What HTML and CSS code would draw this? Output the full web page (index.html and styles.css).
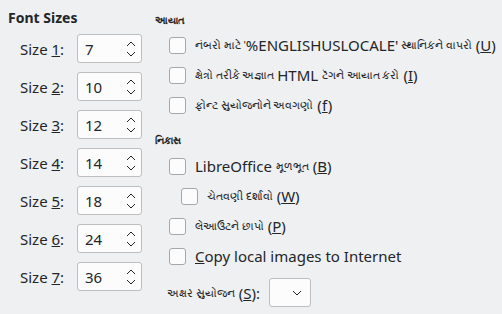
FILE: index.html
```html
<!DOCTYPE html>
<html lang="gu">
<head>
    <meta charset="UTF-8">
    <title>HTML compatibility</title>
    <link rel="stylesheet" href="styles.css">
</head>
<body>
    <div class="page">
        <div class="sizes">
            <h1>Font Sizes</h1>
            <div class="size-list">
                <div class="size-row"><label>Size <u>1</u>:</label><div class="spin"><span>7</span><svg width="12" height="20" viewBox="0 0 12 20"><path d="M2 7 L6 3 L10 7 M2 13 L6 17 L10 13" fill="none" stroke="#232629" stroke-width="1"/></svg></div></div>
                <div class="size-row"><label>Size <u>2</u>:</label><div class="spin"><span>10</span><svg width="12" height="20" viewBox="0 0 12 20"><path d="M2 7 L6 3 L10 7 M2 13 L6 17 L10 13" fill="none" stroke="#232629" stroke-width="1"/></svg></div></div>
                <div class="size-row"><label>Size <u>3</u>:</label><div class="spin"><span>12</span><svg width="12" height="20" viewBox="0 0 12 20"><path d="M2 7 L6 3 L10 7 M2 13 L6 17 L10 13" fill="none" stroke="#232629" stroke-width="1"/></svg></div></div>
                <div class="size-row"><label>Size <u>4</u>:</label><div class="spin"><span>14</span><svg width="12" height="20" viewBox="0 0 12 20"><path d="M2 7 L6 3 L10 7 M2 13 L6 17 L10 13" fill="none" stroke="#232629" stroke-width="1"/></svg></div></div>
                <div class="size-row"><label>Size <u>5</u>:</label><div class="spin"><span>18</span><svg width="12" height="20" viewBox="0 0 12 20"><path d="M2 7 L6 3 L10 7 M2 13 L6 17 L10 13" fill="none" stroke="#232629" stroke-width="1"/></svg></div></div>
                <div class="size-row"><label>Size <u>6</u>:</label><div class="spin"><span>24</span><svg width="12" height="20" viewBox="0 0 12 20"><path d="M2 7 L6 3 L10 7 M2 13 L6 17 L10 13" fill="none" stroke="#232629" stroke-width="1"/></svg></div></div>
                <div class="size-row"><label>Size <u>7</u>:</label><div class="spin"><span>36</span><svg width="12" height="20" viewBox="0 0 12 20"><path d="M2 7 L6 3 L10 7 M2 13 L6 17 L10 13" fill="none" stroke="#232629" stroke-width="1"/></svg></div></div>
            </div>
        </div>

        <div class="options">
            <h2>આયાત</h2>
            <div class="check"><span class="box"></span><span class="gu">નંબરો માટે '</span><span class="en">%ENGLISHUSLOCALE'</span><span class="gu">&nbsp;સ્થાનિકને વાપરો</span><span class="en">&nbsp;(<u>U</u>)</span></div>
            <div class="check"><span class="box"></span><span class="gu">ક્ષેત્રો તરીકે અજ્ઞાત&nbsp;</span><span class="en">HTML&nbsp;</span><span class="gu">ટૅગને આયાત કરો</span><span class="en">&nbsp;(<u>I</u>)</span></div>
            <div class="check"><span class="box"></span><span class="gu">ફોન્ટ સુયોજનોને અવગણો</span><span class="en">&nbsp;(<u>f</u>)</span></div>

            <h2 class="export">નિકાસ</h2>
            <div class="check"><span class="box"></span><span class="en">LibreOffice&nbsp;</span><span class="gu">મૂળભૂત</span><span class="en">&nbsp;(<u>B</u>)</span></div>
            <div class="check nested"><span class="box"></span><span class="gu">ચેતવણી દર્શાવો</span><span class="en">&nbsp;(<u>W</u>)</span></div>
            <div class="check"><span class="box"></span><span class="gu">લેઆઉટને છાપો</span><span class="en">&nbsp;(<u>P</u>)</span></div>
            <div class="check"><span class="box"></span><span class="en"><u>C</u>opy local images to Internet</span></div>

            <div class="charset">
                <span class="gu">અક્ષર સુયોજન</span><span class="en">&nbsp;(<u>S</u>):</span>
                <div class="combo"><svg width="12" height="8" viewBox="0 0 12 8"><path d="M2 2 L6 6 L10 2" fill="none" stroke="#232629" stroke-width="1"/></svg></div>
            </div>
        </div>
    </div>
</body>
</html>
```

FILE: styles.css
```css
body {
    margin: 0;
    background-color: #eff0f1;
    color: #232629;
    font-family: "Noto Sans", sans-serif;
    font-size: 14px;
}

.page {
    display: flex;
    padding: 8px 0 0 8px;
}

.sizes {
    width: 146px;
}

h1 {
    margin: 0;
    font-size: 14px;
    font-weight: bold;
    line-height: 20px;
}

.size-list {
    display: flex;
    flex-direction: column;
    gap: 9px;
    margin-top: 6px;
    padding-left: 12px;
}

.size-row {
    display: flex;
    align-items: center;
    height: 29px;
}

.size-row label {
    width: 57px;
    font-size: 15px;
}

.spin {
    display: flex;
    align-items: center;
    justify-content: space-between;
    box-sizing: border-box;
    width: 65px;
    height: 29px;
    padding: 0 4px 0 7px;
    background-color: #fcfcfc;
    border: 1px solid #bcbebf;
    border-radius: 3px;
    font-size: 15px;
}

.options {
    padding-left: 1px;
}

h2 {
    margin: 5px 0 3px 0;
    font-size: 10px;
    font-weight: bold;
    line-height: 14px;
}

h2.export {
    margin-top: 13px;
    margin-bottom: 4px;
}

.check {
    display: flex;
    align-items: center;
    height: 30px;
    padding-left: 14px;
    white-space: nowrap;
}

.check.nested {
    padding-left: 26px;
}

.box {
    box-sizing: border-box;
    width: 17px;
    height: 17px;
    margin-right: 9px;
    background-color: #fcfcfc;
    border: 1px solid #a5a7a9;
    border-radius: 3px;
}

.gu {
    font-size: 10.5px;
}

.en {
    font-size: 15px;
}

.charset {
    display: flex;
    align-items: center;
    margin-top: 7px;
    padding-left: 12px;
}

.combo {
    display: flex;
    align-items: center;
    justify-content: flex-end;
    box-sizing: border-box;
    width: 42px;
    height: 29px;
    margin-left: 9px;
    padding-right: 7px;
    background-color: #fcfcfc;
    border: 1px solid #bcbebf;
    border-radius: 3px;
}
```
